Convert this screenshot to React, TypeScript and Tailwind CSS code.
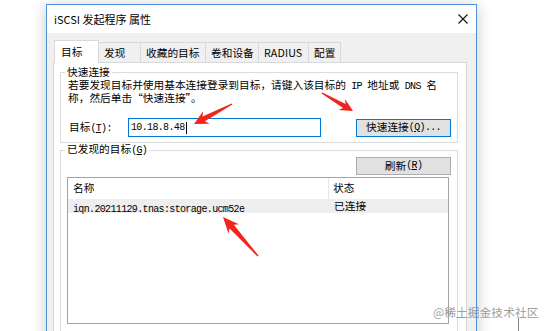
import React from "react";

const mono = "font-['Liberation_Mono',monospace] text-[10px] tracking-[-0.65px]";

function arrowPoints(
  x0: number, y0: number, x1: number, y1: number,
  headLen: number, hw: number, sw: number, tw: number
) {
  const L = Math.hypot(x1 - x0, y1 - y0);
  const dx = (x1 - x0) / L;
  const dy = (y1 - y0) / L;
  const nx = -dy;
  const ny = dx;
  const bx = x1 - dx * headLen;
  const by = y1 - dy * headLen;
  const nb = x1 - dx * (headLen - 3);
  const nby = y1 - dy * (headLen - 3);
  const pts: [number, number][] = [
    [x0 + nx * tw, y0 + ny * tw],
    [nb + nx * sw, nby + ny * sw],
    [bx + nx * hw, by + ny * hw],
    [x1, y1],
    [bx - nx * hw, by - ny * hw],
    [nb - nx * sw, nby - ny * sw],
    [x0 - nx * tw, y0 - ny * tw],
  ];
  return pts.map((p) => `${p[0].toFixed(1)},${p[1].toFixed(1)}`).join(" ");
}

function Tab({ label, w, selected, latin }: { label: string; w: string; selected?: boolean; latin?: boolean }) {
  return (
    <div
      className={
        selected
          ? `${w} h-[23px] -mr-px relative z-10 bg-white border border-[#d9d9d9] border-b-0 flex items-center pl-[6px]`
          : `${w} h-[21px] -mr-px bg-[#f0f0f0] border border-[#d9d9d9] border-b-0 flex items-center pl-[5px]`
      }
    >
      <span className={latin ? "text-[10.7px] tracking-[0.1px]" : "text-[10.7px]"}>{label}</span>
    </div>
  );
}

export default function App() {
  return (
    <div
      lang="zh-CN"
      className="relative w-[548px] h-[331px] overflow-hidden bg-white text-black font-['Noto_Sans_CJK_SC','Noto_Sans',sans-serif] leading-none"
    >
      <div className="pl-[46px] pt-[4px]">
        <div className="w-[431px] h-[345px] border border-[#4d93dc] bg-[#f0f0f0] shadow-[0_2px_14px_rgba(0,0,0,0.22)] flex flex-col">
          {/* Title bar */}
          <div className="h-[28px] bg-white flex items-center justify-between pl-[7px] pr-[8px]">
            <span className="text-[11px]">iSCSI 发起程序 属性</span>
            <svg width="10" height="10" viewBox="0 0 10 10">
              <path d="M0.5 0.5 L9.5 9.5 M9.5 0.5 L0.5 9.5" stroke="#111" strokeWidth="1.1" fill="none" />
            </svg>
          </div>

          {/* Body */}
          <div className="flex-1 flex flex-col pt-[7px] pl-[6px] pr-[9px]">
            {/* Tabs */}
            <div className="flex items-end pl-[1px] -mb-px">
              <Tab label="目标" w="w-[45px]" selected />
              <Tab label="发现" w="w-[43px]" />
              <Tab label="收藏的目标" w="w-[66px]" />
              <Tab label="卷和设备" w="w-[54px]" />
              <Tab label="RADIUS" w="w-[51px]" latin />
              <Tab label="配置" w="w-[33px]" />
            </div>

            {/* Panel */}
            <div className="flex-1 bg-white border border-[#d9d9d9] pl-[6px] pr-[8px] pt-[3px]">
              {/* Group 1 */}
              <fieldset className="w-[398px] border border-[#dcdcdc] pb-[5px]">
                <legend className="ml-[4px] px-[2px] text-[10.7px] leading-[12px]">快速连接</legend>
                <div className="pl-[7px] pr-[6px]">
                  <div className="mt-[1px] text-[10.7px] leading-[11px] whitespace-nowrap">
                    若要发现目标并使用基本连接登录到目标，请键入该目标的<span className={mono}> IP </span>地址或<span className={mono}> DNS </span>名
                    <br />
                    称，然后单击“快速连接”。
                  </div>
                  <div className="mt-[15px] flex items-center">
                    <div className="w-[60px] pl-[1px] text-[10.7px] whitespace-nowrap">
                      目标<span className={mono}>(<span className="underline">T</span>):</span>
                    </div>
                    <div className="w-[193px] h-[19px] border border-[#0078d7] flex items-center pl-[2px]">
                      <span className={mono}>10.18.8.48</span>
                      <span className="w-px h-[12px] bg-black ml-[1px]" />
                    </div>
                    <div className="ml-auto w-[95px] h-[18px] bg-[#e1e1e1] border border-[#0078d7] flex items-center justify-center text-[10.7px] whitespace-nowrap">
                      快速连接<span className={mono}>(<span className="underline">Q</span>)...</span>
                    </div>
                  </div>
                </div>
              </fieldset>

              {/* Group 2 */}
              <fieldset className="w-[398px] border border-[#dcdcdc] pb-[10px]">
                <legend className="ml-[4px] px-[2px] text-[10.7px] leading-[12px] whitespace-nowrap">
                  已发现的目标<span className={mono}>(<span className="underline">G</span>)</span>
                </legend>
                <div className="pl-[6px] pr-[8px]">
                  <div className="flex justify-end -mr-[2px]">
                    <div className="w-[95px] h-[18px] bg-[#e1e1e1] border border-[#adadad] flex items-center justify-center text-[10.7px] whitespace-nowrap">
                      刷新<span className={mono}>(<span className="underline">R</span>)</span>
                    </div>
                  </div>
                  <div className="mt-[2px] w-[382px] h-[147px] border border-[#a3a3a3] bg-white">
                    <div className="h-[21px] flex items-stretch">
                      <div className="w-[261px] flex items-center pl-[5px] border-r border-[#e5e5e5] text-[10.7px]">名称</div>
                      <div className="flex-1 flex items-center pl-[4px] text-[10.7px]">状态</div>
                    </div>
                    <div className="h-[14px] flex items-center bg-[#eeeeee]">
                      <div className="w-[261px] pl-[5px]">
                        <span className={mono}>iqn.20211129.tnas:storage.ucm52e</span>
                      </div>
                      <div className="flex-1 pl-[5px] text-[10.7px]">已连接</div>
                    </div>
                  </div>
                </div>
              </fieldset>
            </div>
          </div>
        </div>
      </div>

      {/* Red annotation arrows */}
      <svg className="absolute left-0 top-0 pointer-events-none" width="548" height="331" viewBox="0 0 548 331">
        <polygon points={arrowPoints(232, 104, 194, 124, 14, 7, 2.6, 0.7)} fill="#f0251b" />
        <polygon points={arrowPoints(322, 93, 353, 111, 13, 6.5, 2.4, 0.7)} fill="#f0251b" />
        <polygon points={arrowPoints(258, 256, 223, 217, 16, 7, 2.8, 0.7)} fill="#f0251b" />
      </svg>

      {/* Watermark */}
      <div className="absolute left-[433px] top-[306px] text-[11.8px] leading-none text-[rgba(130,130,130,0.8)] whitespace-nowrap">
        @稀土掘金技术社区
      </div>
      <div className="absolute left-[518px] top-[318px] w-px h-[13px] bg-[#8a8a8a]" />
    </div>
  );
}
